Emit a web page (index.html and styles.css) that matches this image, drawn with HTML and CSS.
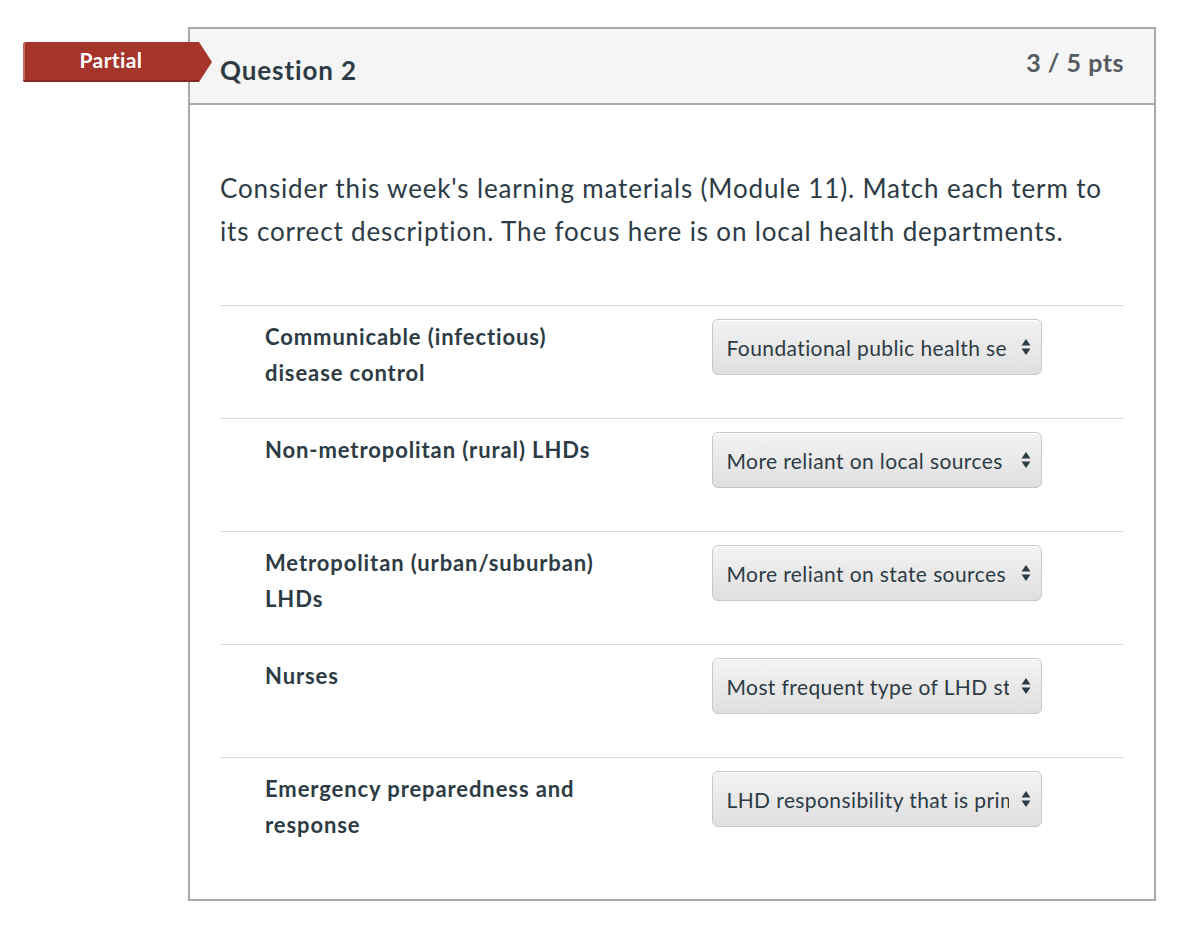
FILE: index.html
```html
<!DOCTYPE html>
<html>
<head>
<meta charset="utf-8">
<link rel="stylesheet" href="styles.css">
</head>
<body>
<div class="page">
  <div class="badge"><span>Partial</span></div>
  <div class="card">
    <div class="card-header">
      <div class="title">Question 2</div>
      <div class="pts">3 / 5 pts</div>
    </div>
    <div class="card-body">
      <p class="question">Consider this week's learning materials (Module 11). Match each term to its correct description. The focus here is on local health departments.</p>
      <div class="matches">
        <div class="row">
          <div class="term">Communicable (infectious) disease control</div>
          <div class="select"><span class="sel-text">Foundational public health se</span><svg class="arrows" width="10" height="18" viewBox="0 0 10 18"><path d="M5 1 L9.5 7.5 H0.5 Z M5 17 L9.5 10.5 H0.5 Z" fill="#2d3b45"/></svg></div>
        </div>
        <div class="row">
          <div class="term">Non-metropolitan (rural) LHDs</div>
          <div class="select"><span class="sel-text">More reliant on local sources</span><svg class="arrows" width="10" height="18" viewBox="0 0 10 18"><path d="M5 1 L9.5 7.5 H0.5 Z M5 17 L9.5 10.5 H0.5 Z" fill="#2d3b45"/></svg></div>
        </div>
        <div class="row">
          <div class="term">Metropolitan (urban/suburban) LHDs</div>
          <div class="select"><span class="sel-text">More reliant on state sources</span><svg class="arrows" width="10" height="18" viewBox="0 0 10 18"><path d="M5 1 L9.5 7.5 H0.5 Z M5 17 L9.5 10.5 H0.5 Z" fill="#2d3b45"/></svg></div>
        </div>
        <div class="row">
          <div class="term">Nurses</div>
          <div class="select"><span class="sel-text">Most frequent type of LHD staff</span><svg class="arrows" width="10" height="18" viewBox="0 0 10 18"><path d="M5 1 L9.5 7.5 H0.5 Z M5 17 L9.5 10.5 H0.5 Z" fill="#2d3b45"/></svg></div>
        </div>
        <div class="row">
          <div class="term">Emergency preparedness and response</div>
          <div class="select"><span class="sel-text">LHD responsibility that is primarily</span><svg class="arrows" width="10" height="18" viewBox="0 0 10 18"><path d="M5 1 L9.5 7.5 H0.5 Z M5 17 L9.5 10.5 H0.5 Z" fill="#2d3b45"/></svg></div>
        </div>
      </div>
    </div>
  </div>
</div>
</body>
</html>
```

FILE: styles.css
```css
html, body {
  margin: 0;
  padding: 0;
  background: #ffffff;
}
body {
  font-family: Lato, "Open Sans", "Liberation Sans", sans-serif;
  color: #2d3b45;
}
.page {
  position: relative;
  padding: 27px 0 0 188px;
  width: 968px;
}
.badge {
  position: absolute;
  left: 23px;
  top: 42px;
  width: 189px;
  height: 40px;
  z-index: 2;
}
.badge::before {
  content: "";
  position: absolute;
  inset: 0;
  background: #a5342b;
  clip-path: polygon(0 0, 176px 0, 189px 50%, 176px 100%, 0 100%);
  border-radius: 3px 0 0 3px;
  box-shadow: inset 2px 0 0 #c4675f;
}
.badge::after {
  content: "";
  position: absolute;
  left: 0;
  right: 13px;
  bottom: 0;
  height: 2px;
  background: #86261f;
  border-radius: 0 0 0 3px;
}
.badge span {
  position: relative;
  display: block;
  width: 176px;
  line-height: 40px;
  text-align: center;
  color: #ffffff;
  font-size: 21px;
  font-weight: 700;
  letter-spacing: 0.4px;
  margin-top: -2px;
}
.card {
  border: 2px solid #a9a9a9;
  box-sizing: border-box;
  width: 968px;
}
.card-header {
  background: #f5f5f5;
  border-bottom: 2px solid #a9a9a9;
  height: 74px;
  display: flex;
  justify-content: space-between;
  padding: 0 30px;
}
.title {
  font-size: 26px;
  font-weight: 700;
  letter-spacing: 0.9px;
  line-height: 30px;
  margin-top: 26px;
}
.pts {
  font-size: 25px;
  font-weight: 700;
  letter-spacing: 0.5px;
  color: #555b60;
  line-height: 30px;
  margin-top: 18px;
}
.card-body {
  padding: 62px 30px 29px;
}
.question {
  margin: 0;
  font-size: 26px;
  letter-spacing: 0.85px;
  line-height: 43px;
}
.matches {
  margin-top: 52px;
}
.row {
  border-top: 1.5px solid #dcdcdc;
  height: 113px;
  box-sizing: border-box;
  padding: 13px 0 0 45px;
  display: grid;
  grid-template-columns: 447px 330px;
  align-items: start;
}
.term {
  font-size: 22px;
  font-weight: 700;
  letter-spacing: 0.9px;
  line-height: 36px;
  max-width: 345px;
}
.select {
  height: 56px;
  box-sizing: border-box;
  border: 1.5px solid #c8c8c8;
  border-radius: 6px;
  background: linear-gradient(#f3f3f3, #dfdfdf);
  box-shadow: inset 0 1px 0 #ffffff;
  display: flex;
  align-items: center;
  padding: 0 10px 0 13.5px;
  overflow: hidden;
}
.sel-text {
  flex: 1;
  min-width: 0;
  font-size: 21px;
  letter-spacing: 0.4px;
  white-space: nowrap;
  overflow: hidden;
  margin-right: 12px;
}
.arrows {
  flex: none;
}
```
